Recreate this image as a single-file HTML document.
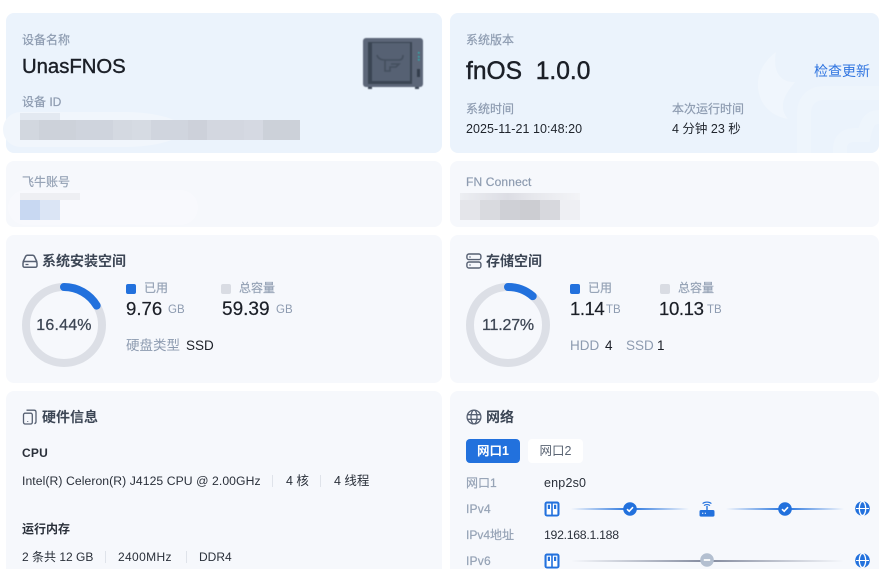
<!DOCTYPE html>
<html lang="zh-CN"><head><meta charset="utf-8"><title>设备信息</title>
<style>
html,body{margin:0;padding:0;background:#fff}
#r{position:relative;width:879px;height:569px;overflow:hidden;background:#fff;font-family:"Liberation Sans","Noto Sans CJK SC",sans-serif;color:#1b1f27}
.c{position:absolute;border-radius:8px;background:#f6f8fc;overflow:hidden}
.b{background:#ebf3fc}
.t{position:absolute;white-space:nowrap;line-height:20px}
.g{color:#8d9bb0;font-size:12px;-webkit-text-stroke:.2px #8d9bb0}
.h{color:#3c4655;font-size:14px;font-weight:bold}
.u{color:#8d9bb0;font-size:12px}
.n{font-size:19px;-webkit-text-stroke:.2px #1b1f27}
.d{font-size:12px;color:#2a303a}
.s{position:absolute;width:10px;height:10px;border-radius:2px}
.p{position:absolute}
.l{position:absolute;width:1px;height:12px;background:#dfe3ea}
svg{position:absolute;overflow:visible}
</style></head><body><div id="r">

<div class="c b" style="left:6px;top:13px;width:436px;height:140px"></div>
<div class="c b" style="left:450px;top:13px;width:429px;height:140px">
<svg style="left:0;top:0" width="429" height="140" viewBox="0 0 429 140"><path d="M326 39C312 50 307 62 308 75C310 93 322 103 338 106C326 92 338 78 345 69C332 70 322 60 326 39Z" fill="#fff" opacity=".25"/><path d="M354 140V100C354 88 362 80 374 80H429M390 140V135C390 128 395 122 404 122H414C417 108 421 104 429 104" fill="none" stroke="#fff" stroke-width="14" opacity=".16"/></svg>
</div>
<div class="c" style="left:6px;top:161px;width:436px;height:66px"></div>
<div class="c" style="left:450px;top:161px;width:429px;height:66px"></div>
<div class="c" style="left:6px;top:235px;width:436px;height:148px"></div>
<div class="c" style="left:450px;top:235px;width:429px;height:148px"></div>
<div class="c" style="left:6px;top:391px;width:436px;height:190px"></div>
<div class="c" style="left:450px;top:391px;width:429px;height:190px"></div>

<!-- masked blocks halo -->
<div class="p" style="left:3px;top:112px;width:180px;height:35px;background:#f1f6fc;border-radius:18px 60px 60px 18px/18px"></div>
<div class="p" style="left:8px;top:190px;width:190px;height:35px;background:#f8f9fd;border-radius:18px"></div>

<!-- Device ID mask -->
<div class="p" style="left:20px;top:113px;width:40px;height:7px;background:#e3e9f1"></div>
<div class="p" style="left:20px;top:120px;width:280px;height:20px;display:flex">
<i style="width:20px;background:#d2d7df"></i><i style="width:40px;background:#cdd2da"></i><i style="width:40px;background:#cfd4dd"></i><i style="width:20px;background:#d4d9e1"></i><i style="width:20px;background:#d6dbe3"></i><i style="width:40px;background:#d0d5de"></i><i style="width:20px;background:#cdd1da"></i><i style="width:40px;background:#d3d7e0"></i><i style="width:20px;background:#d5d9e2"></i><i style="width:40px;background:#ccd1d9"></i>
</div>
<!-- account mask -->
<div class="p" style="left:20px;top:193px;width:60px;height:7px;background:#eeeff3"></div>
<div class="p" style="left:20px;top:200px;width:20px;height:20px;background:#c8d8f2"></div>
<div class="p" style="left:40px;top:200px;width:20px;height:20px;background:#dbe5f5"></div>
<!-- connect mask -->
<div class="p" style="left:460px;top:193px;width:120px;height:7px;background:linear-gradient(90deg,#eceef2,#dcdde4 40%,#e6e7ec 60%,#f3f4f7)"></div>
<div class="p" style="left:460px;top:200px;width:120px;height:20px;display:flex"><i style="width:20px;background:#e4e5ea"></i><i style="width:20px;background:#d9dadf"></i><i style="width:20px;background:#cfd0d6"></i><i style="width:20px;background:#cccdd2"></i><i style="width:20px;background:#d7d8dd"></i><i style="width:20px;background:#eeeff3"></i></div>

<!-- top left -->
<div class="t g" style="left:22px;top:30px">设备名称</div>
<div class="t" style="left:22px;top:56px;font-size:20.3px;line-height:22px;-webkit-text-stroke:.4px #1b1f27">UnasFNOS</div>
<div class="t g" style="left:22px;top:92px">设备 ID</div>

<svg style="left:362px;top:37px;filter:blur(.4px)" width="62" height="53" viewBox="0 0 62 53">
<rect x="1" y="1" width="60" height="49" rx="3" fill="#5c6678"/>
<rect x="6" y="5" width="44" height="42" fill="#3a4553"/>
<rect x="10" y="6" width="38" height="38" fill="#566173"/>
<path d="M15 18C16 22 19 23 23 23H37C40 23 41 21 41 18M23 23V34H28V30H34L37 27H29" fill="none" stroke="#444f5e" stroke-width="1.6"/>
<rect x="56" y="15" width="1.6" height="1.6" fill="#2fb0b0"/><rect x="56" y="19" width="1.6" height="1.6" fill="#2fb0b0"/><rect x="56" y="22" width="1.6" height="1.6" fill="#2fb0b0"/>
<rect x="55" y="32" width="3" height="8" fill="#343e4c"/>
<rect x="6" y="50" width="4" height="2" fill="#3c4655"/><rect x="53" y="50" width="4" height="2" fill="#3c4655"/>
</svg>

<!-- top right -->
<div class="t g" style="left:466px;top:30px">系统版本</div>
<div class="t" style="left:466px;top:60px;font-size:24.6px;line-height:24px;-webkit-text-stroke:.45px #1b1f27">fnOS&nbsp; 1.0.0</div>
<div class="t" style="left:814px;top:61px;font-size:14px;color:#2f74e0">检查更新</div>
<div class="t g" style="left:466px;top:99px">系统时间</div>
<div class="t g" style="left:672px;top:99px">本次运行时间</div>
<div class="t d" style="left:466px;top:119px;color:#1f242c;font-size:12.5px;letter-spacing:.05px">2025-11-21 10:48:20</div>
<div class="t d" style="left:672px;top:119px;color:#1f242c;font-size:12.5px">4 分钟 23 秒</div>

<div class="t g" style="left:22px;top:172px;color:#98a5b7">飞牛账号</div>
<div class="t g" style="left:466px;top:172px;letter-spacing:.15px">FN Connect</div>

<!-- install space -->
<svg style="left:22px;top:254px" width="16" height="15" viewBox="0 0 16 15" fill="none" stroke="#566072" stroke-width="1.5"><path d="M1 8L3.5 2.6C3.9 1.7 4.5 1.2 5.4 1.2H10.6C11.5 1.2 12.1 1.7 12.5 2.6L15 8"/><rect x="1" y="7.5" width="14" height="5.8" rx="1.6"/><path d="M3.5 10.5H6.5" stroke-width="1.2"/></svg>
<div class="t h" style="left:42px;top:251px">系统安装空间</div>
<svg style="left:22px;top:283px" width="84" height="84" viewBox="0 0 84 84"><circle cx="42" cy="42" r="38" fill="none" stroke="#dcdfe6" stroke-width="8"/><circle cx="42" cy="42" r="38" fill="none" stroke="#2271dd" stroke-width="8" stroke-linecap="round" stroke-dasharray="39.25 300" transform="rotate(-90 42 42)"/></svg>
<div class="t" style="left:22px;top:316px;width:84px;text-align:center;font-size:16px;color:#3d4654;-webkit-text-stroke:.25px #3d4654;letter-spacing:.2px">16.44%</div>
<div class="s" style="left:126px;top:284px;background:#2271dd"></div>
<div class="t g" style="left:144px;top:278px;color:#98a5b7">已用</div>
<div class="s" style="left:221px;top:284px;background:#d9dce3"></div>
<div class="t g" style="left:239px;top:278px;color:#98a5b7">总容量</div>
<div class="t n" style="left:126px;top:299px;font-size:18.6px">9.76</div>
<div class="t u" style="left:168px;top:300px;font-size:11.5px">GB</div>
<div class="t n" style="left:222px;top:300px;font-size:19px">59.39</div>
<div class="t u" style="left:276px;top:300px;font-size:11.5px">GB</div>
<div class="t" style="left:126px;top:336px;font-size:13.5px;color:#8d9bb0">硬盘类型</div>
<div class="t" style="left:186px;top:336px;font-size:13.5px">SSD</div>

<!-- storage -->
<svg style="left:466px;top:253px" width="16" height="16" viewBox="0 0 16 16" fill="none" stroke="#566072" stroke-width="1.4"><rect x=".9" y="1" width="14" height="5.6" rx="2"/><rect x=".9" y="9" width="14" height="6" rx="2"/><path d="M3 4H5M3 12H5" stroke="#9aa3b1"/></svg>
<div class="t h" style="left:486px;top:251px">存储空间</div>
<svg style="left:466px;top:283px" width="84" height="84" viewBox="0 0 84 84"><circle cx="42" cy="42" r="38" fill="none" stroke="#dcdfe6" stroke-width="8"/><circle cx="42" cy="42" r="38" fill="none" stroke="#2271dd" stroke-width="8" stroke-linecap="round" stroke-dasharray="26.9 300" transform="rotate(-90 42 42)"/></svg>
<div class="t" style="left:466px;top:316px;width:84px;text-align:center;font-size:16px;color:#3d4654;-webkit-text-stroke:.25px #3d4654;letter-spacing:-.2px">11.27%</div>
<div class="s" style="left:570px;top:284px;background:#2271dd"></div>
<div class="t g" style="left:588px;top:278px;color:#98a5b7">已用</div>
<div class="s" style="left:660px;top:284px;background:#d9dce3"></div>
<div class="t g" style="left:678px;top:278px;color:#98a5b7">总容量</div>
<div class="t n" style="left:570px;top:299px;font-size:18.6px;letter-spacing:-.5px">1.14</div>
<div class="t u" style="left:606px;top:300px;font-size:11.5px">TB</div>
<div class="t n" style="left:659px;top:299px;font-size:18.6px;letter-spacing:-.4px">10.13</div>
<div class="t u" style="left:707px;top:300px;font-size:11.5px">TB</div>
<div class="t" style="left:570px;top:336px;font-size:13.5px;color:#8d9bb0">HDD</div>
<div class="t" style="left:605px;top:336px;font-size:13.5px">4</div>
<div class="t" style="left:626px;top:336px;font-size:13.5px;color:#8d9bb0">SSD</div>
<div class="t" style="left:657px;top:336px;font-size:13.5px">1</div>

<!-- hardware -->
<svg style="left:22px;top:409px" width="16" height="16" viewBox="0 0 16 16" fill="none" stroke="#566072" stroke-width="1.3"><rect x="1.5" y="4.2" width="8.8" height="10.8" rx="1.6"/><path d="M4.5 1.2H12C13.2 1.2 14 2 14 3.2V12.6C14 13.6 13.4 14.4 12.4 14.6"/><path d="M5.7 12.2V13" stroke-width="1.2"/></svg>
<div class="t h" style="left:42px;top:407px">硬件信息</div>
<div class="t" style="left:22px;top:443px;font-size:12px;font-weight:bold;color:#2a303a;letter-spacing:.2px">CPU</div>
<div class="t d" style="left:22px;top:471px;font-size:12.2px;letter-spacing:.07px">Intel(R) Celeron(R) J4125 CPU @ 2.00GHz</div>
<div class="l" style="left:272px;top:475px"></div>
<div class="t d" style="left:286px;top:471px;font-size:12.5px">4 核</div>
<div class="l" style="left:320px;top:475px"></div>
<div class="t d" style="left:334px;top:471px;font-size:12.5px">4 线程</div>
<div class="t" style="left:22px;top:519px;font-size:12px;font-weight:bold;color:#2a303a">运行内存</div>
<div class="t d" style="left:22px;top:547px">2 条共 12 GB</div>
<div class="l" style="left:105px;top:551px"></div>
<div class="t d" style="left:118px;top:547px;letter-spacing:.35px">2400MHz</div>
<div class="l" style="left:186px;top:551px"></div>
<div class="t d" style="left:199px;top:547px">DDR4</div>

<!-- network -->
<svg style="left:466px;top:409px" width="16" height="16" viewBox="0 0 16 16" fill="none" stroke="#566072" stroke-width="1.3"><circle cx="8" cy="8" r="6.9"/><ellipse cx="8" cy="8" rx="3" ry="6.9"/><path d="M1.5 5.7H14.5M1.5 10.3H14.5"/></svg>
<div class="t h" style="left:486px;top:407px">网络</div>
<div class="p" style="left:466px;top:439px;width:54px;height:24px;border-radius:4px;background:#2271dd;color:#fff;font-size:12.5px;font-weight:bold;line-height:24px;text-align:center">网口1</div>
<div class="p" style="left:528px;top:439px;width:55px;height:24px;border-radius:4px;background:#fff;color:#5a6473;font-size:12.5px;line-height:24px;text-align:center">网口2</div>

<div class="t g" style="left:466px;top:473px;color:#98a5b7">网口1</div>
<div class="t d" style="left:544px;top:473px;font-size:12.5px;letter-spacing:.2px">enp2s0</div>
<div class="t g" style="left:466px;top:499px;color:#98a5b7;letter-spacing:.2px">IPv4</div>
<div class="t g" style="left:466px;top:525px;color:#98a5b7">IPv4地址</div>
<div class="t d" style="left:544px;top:525px;font-size:12.3px;letter-spacing:-.3px">192.168.1.188</div>
<div class="t g" style="left:466px;top:551px;color:#98a5b7;letter-spacing:.2px">IPv6</div>

<!-- port icons -->
<svg style="left:544px;top:501px" width="16" height="16" viewBox="0 0 16 16"><rect x=".5" y=".5" width="15" height="15" rx="2.5" fill="#2271dd"/><rect x="2.6" y="2.6" width="4.6" height="11" fill="#fff"/><rect x="8.8" y="2.6" width="4.6" height="11" fill="#fff"/><path d="M3.8 3.8H6V8H3.8ZM10 3.8H12.2V8H10Z" fill="#2271dd"/></svg>
<svg style="left:544px;top:553px" width="16" height="16" viewBox="0 0 16 16"><rect x=".5" y=".5" width="15" height="15" rx="2.5" fill="#2271dd"/><rect x="2.6" y="2.6" width="4.6" height="11" fill="#fff"/><rect x="8.8" y="2.6" width="4.6" height="11" fill="#fff"/><path d="M3.8 3.8H6V8H3.8ZM10 3.8H12.2V8H10Z" fill="#2271dd"/></svg>

<!-- lines -->
<div class="p" style="left:571px;top:508px;width:118px;height:2px;background:linear-gradient(90deg,rgba(34,113,221,0),#2271dd 50%,rgba(34,113,221,0))"></div>
<div class="p" style="left:726px;top:508px;width:118px;height:2px;background:linear-gradient(90deg,rgba(34,113,221,0),#2271dd 50%,rgba(34,113,221,0))"></div>
<div class="p" style="left:571px;top:560px;width:273px;height:2px;background:linear-gradient(90deg,rgba(130,138,158,0),#838a9e 50%,rgba(130,138,158,0))"></div>

<svg style="left:623px;top:502px" width="14" height="14" viewBox="0 0 14 14"><circle cx="7" cy="7" r="6.8" fill="#2271dd"/><path d="M4 7.2L6.2 9.2L10 5.2" fill="none" stroke="#fff" stroke-width="1.6"/></svg>
<svg style="left:778px;top:502px" width="14" height="14" viewBox="0 0 14 14"><circle cx="7" cy="7" r="6.8" fill="#2271dd"/><path d="M4 7.2L6.2 9.2L10 5.2" fill="none" stroke="#fff" stroke-width="1.6"/></svg>
<svg style="left:700px;top:553px" width="14" height="14" viewBox="0 0 14 14"><circle cx="7" cy="7" r="6.8" fill="#b3bfd0"/><path d="M3.8 7H10.2" stroke="#fff" stroke-width="1.7"/></svg>

<!-- router -->
<svg style="left:699px;top:501px" width="16" height="16" viewBox="0 0 16 16"><rect x=".5" y="9" width="15" height="6.6" rx="1.6" fill="#2271dd"/><path d="M8 5V9" stroke="#2271dd" stroke-width="1.4"/><path d="M5 4.6C6.6 3.2 9.4 3.2 11 4.6M3.6 2.6C6 .6 10 .6 12.4 2.6" fill="none" stroke="#2271dd" stroke-width="1.1"/><path d="M3 12.3H4.3M5.8 12.3H7" stroke="#fff" stroke-width="1"/></svg>

<!-- globes -->
<svg style="left:855px;top:501px" width="15" height="15" viewBox="0 0 15 15"><circle cx="7.5" cy="7.5" r="7.3" fill="#2271dd"/><ellipse cx="7.5" cy="7.5" rx="3.2" ry="7" fill="none" stroke="#fff" stroke-width="1.3"/><path d="M1 7.5H14" stroke="#fff" stroke-width="1"/></svg>
<svg style="left:855px;top:553px" width="15" height="15" viewBox="0 0 15 15"><circle cx="7.5" cy="7.5" r="7.3" fill="#2271dd"/><ellipse cx="7.5" cy="7.5" rx="3.2" ry="7" fill="none" stroke="#fff" stroke-width="1.3"/><path d="M1 7.5H14" stroke="#fff" stroke-width="1"/></svg>

</div></body></html>
